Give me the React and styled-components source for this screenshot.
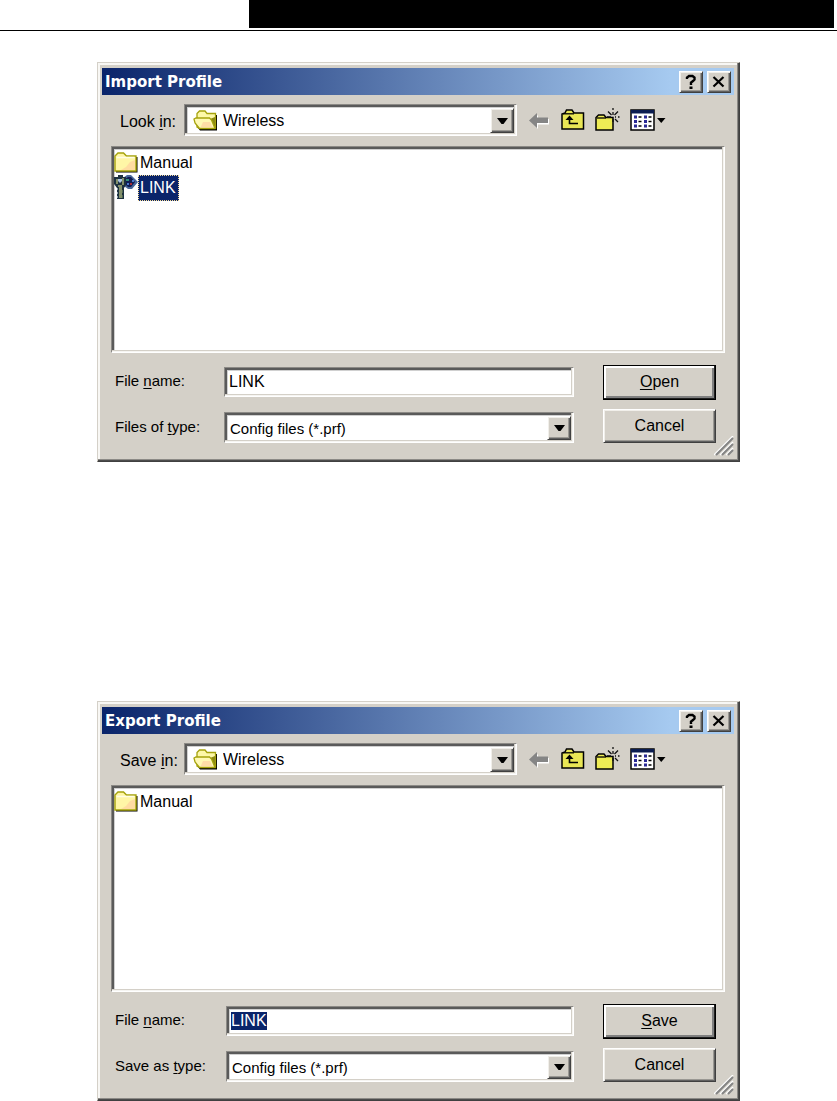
import React, { useEffect, useRef } from 'react';
import styled, { createGlobalStyle, css } from 'styled-components';

const GlobalStyle = createGlobalStyle`
  * {
    box-sizing: border-box;
  }

  body {
    margin: 0;
    background: #ffffff;
    color: #000000;
    font-family: 'Liberation Sans', Arial, sans-serif;
    font-size: 16px;
  }

  u {
    text-underline-offset: 2px;
    text-decoration-thickness: 1px;
  }
`;

const raised = css`
  border: 1px solid;
  border-color: #ffffff #404040 #404040 #ffffff;
  box-shadow: inset 1px 1px 0 #f1efea, inset -1px -1px 0 #606060, inset -2px -2px 0 #9a9893;
`;

const sunken = css`
  border: 1px solid;
  border-color: #8c8a86 #ffffff #ffffff #8c8a86;
  box-shadow: inset -1px -1px 0 #f6f5f2, inset -2px -2px 0 #d4d0c8, inset 2px 2px 0 #5a5a5a,
    inset 3px 3px 0 #d0d0d0;
`;

const PageHeader = styled.header`
  padding: 0 3px 2px 249px;
  border-bottom: 1px solid #000000;
`;

const HeaderBar = styled.div`
  height: 28px;
  background: #000000;
`;

const Page = styled.main`
  display: flex;
  flex-direction: column;
  gap: 239px;
  padding: 31px 97px 0;
`;

const DialogWindow = styled.section`
  position: relative;
  padding: 5px 5px 18px 4px;
  background: #d4d0c8;
  border: 1px solid;
  border-color: #d4d0c8 #404040 #404040 #d4d0c8;
  box-shadow: inset -1px -1px 0 #4c4c4c, inset -2px -2px 0 #8c8a86, inset 2px 2px 0 #f8f7f4;
`;

const TitleBar = styled.div`
  display: flex;
  align-items: center;
  gap: 4px;
  height: 27px;
  padding: 0 3px;
  background: linear-gradient(to right, #0a246a, #a6caf0 90%);
`;

const Title = styled.h2`
  flex: 1;
  margin: 0;
  color: #ffffff;
  font-family: 'DejaVu Sans', Verdana, sans-serif;
  font-size: 15px;
  font-weight: bold;
  line-height: 24px;
`;

const CaptionButton = styled.button`
  ${raised}
  display: flex;
  align-items: center;
  justify-content: center;
  width: 24px;
  height: 22px;
  padding: 0;
  background: #d4d0c8;
`;

const Body = styled.div`
  display: flex;
  flex-direction: column;
  padding: 9px 9px 0;
`;

const LocationRow = styled.div`
  display: flex;
  align-items: center;
  height: 32px;
`;

const LocationLabel = styled.label`
  width: 73px;
  padding: 3px 0 0 9px;
  white-space: nowrap;
`;

const Combo = styled.div`
  ${sunken}
  display: flex;
  flex: 1;
  align-items: center;
  min-width: 0;
  height: ${props => props.$tall ? '32px' : '31px'};
  padding: 3px 2px 2px ${props => props.$tall ? '8px' : '3px'};
  background: #ffffff;
`;

const Select = styled.select`
  flex: 1;
  min-width: 0;
  height: 24px;
  padding: 0 0 0 ${props => props.$indent}px;
  appearance: none;
  background: transparent;
  border: none;
  outline: none;
  color: #000000;
  font: inherit;
  font-size: ${props => props.$size}px;
`;

const DropArrow = styled.span`
  ${raised}
  display: flex;
  align-items: center;
  justify-content: center;
  align-self: stretch;
  width: 24px;
  background: #d4d0c8;
  pointer-events: none;
`;

const Toolbar = styled.div`
  display: flex;
  align-items: center;
  gap: 10px;
  width: 208px;
  padding-left: 12px;
`;

const ToolButton = styled.button`
  display: flex;
  padding: 0;
  background: none;
  border: none;
`;

const FileList = styled.ul`
  ${sunken}
  height: 207px;
  margin: 10px 0 0;
  padding: 3px 2px;
  background: #ffffff;
  list-style: none;
`;

const FileItem = styled.button`
  display: flex;
  align-items: center;
  height: 25px;
  padding: 0;
  background: none;
  border: none;
  color: #000000;
  font: inherit;
`;

const FileName = styled.span`
  padding: 0 2px 0 1px;
  line-height: 24px;
  border: 1px solid transparent;

  ${props => props.$selected && css`
    background: #0a246a;
    border: 1px dotted #f5db95;
    color: #ffffff;
  `}
`;

const Footer = styled.div`
  display: flex;
  justify-content: space-between;
  gap: 29px;
  margin-top: 12px;
  padding-right: 9px;
`;

const Fields = styled.div`
  display: grid;
  flex: 1;
  grid-template-columns: ${props => props.$labelWidth}px 1fr;
  row-gap: 15px;
  align-items: center;
  padding-top: 2px;
`;

const FieldLabel = styled.label`
  padding: 0 0 3px 4px;
  font-size: 15px;
  white-space: nowrap;
`;

const NameInput = styled.input`
  ${sunken}
  width: 100%;
  height: 30px;
  padding: 0 4px;
  background: #ffffff;
  outline: none;
  color: #000000;
  font: inherit;

  &::selection {
    background: #0a246a;
    color: #ffffff;
  }
`;

const Actions = styled.div`
  display: flex;
  flex-direction: column;
  gap: 9px;
`;

const ActionButton = styled.button`
  ${raised}
  width: 113px;
  height: 34px;
  padding: 0 0 1px;
  background: #d4d0c8;
  color: #000000;
  font: inherit;

  ${props => props.$primary && css`
    height: 35px;
    border-color: #000000;
    box-shadow: inset -1px -1px 0 #202020, inset 2px 2px 0 #ffffff, inset -3px -3px 0 #808080;
  `}
`;

const Grip = styled.svg`
  position: absolute;
  right: 5px;
  bottom: 5px;
`;

const HelpIcon = () => (
  <svg width="12" height="16" viewBox="0 0 12 16" fill="none" stroke="#000" aria-hidden="true">
    <path d="M2 5V3.500L4 2h3.500l2 1.500v2L8 7 6 8.500V11" strokeWidth="2.400" />
    <path d="M4.500 12.500h3v2.500h-3z" fill="#000" stroke="none" />
  </svg>
);

const CloseIcon = () => (
  <svg width="14" height="14" viewBox="0 0 14 14" aria-hidden="true">
    <path d="M1.500 2l10 9.500M11.500 2l-10 9.500" stroke="#000" strokeWidth="2.200" />
  </svg>
);

const TriangleIcon = () => (
  <svg width="11" height="6" viewBox="0 0 11 6" aria-hidden="true">
    <path d="M0 0h11L6.500 6h-2z" fill="#000" />
  </svg>
);

const OpenFolderIcon = () => (
  <svg width="25" height="21" viewBox="0 0 25 21" aria-hidden="true">
    <path d="M5 18h17V5h2v15.500H7z" fill="#000" />
    <path d="M4 17V3.500L6.500 1h5.500l2 2.500h8.500V18H6z" fill="#fdf8a8" stroke="#a5a20c" strokeWidth="1.300" />
    <path d="M17 9l5-2v11.500z" fill="#8d8a14" />
    <path d="M1 9l2-1h13.500l2 2 3.500 8.500H6.500L2 13z" fill="#fff9b4" stroke="#a5a20c" strokeWidth="1.300" />
    <path d="M10 12h7l2.500 5.500H7.500z" fill="#ffd6a4" opacity="0.800" />
  </svg>
);

const FolderIcon = () => (
  <svg width="24" height="22" viewBox="0 0 24 22" aria-hidden="true">
    <path d="M2 19h20V5h1.500v15.500H2z" fill="#000" />
    <path d="M1 19V4l3-3h5.500l3 3H22v15z" fill="#fff6a6" stroke="#a5a20c" strokeWidth="1.400" />
    <path d="M2.500 5.500h18" stroke="#fffde4" strokeWidth="1.500" />
    <path d="M21 8v10H7l5-3 4-5z" fill="#ffd2a0" opacity="0.700" />
  </svg>
);

const ProfileIcon = () => (
  <svg width="24" height="25" viewBox="0 0 24 25" aria-hidden="true">
    <path d="M9 3l4-3h4l7 7-6 7h-4l-4-3z" fill="#49689a" />
    <path d="M11 4l3-2h3l4 5-4 5h-3l-3-3z" fill="#101c52" />
    <path d="M12 4h3v2h-3z" fill="#2f8f78" />
    <path d="M16 8h2v2h-2z" fill="#a52936" />
    <path d="M13 8h2v2h-2zM18 5h2v2h-2z" fill="#4a78cc" />
    <path d="M0 2h4V0h5v2h3v8l-2 3v11H3V13L0 9z" fill="#1d3140" />
    <path d="M2 4h2v5H2zM8 3h2v7H8zM4 10h4v2H4zM5 12h3v11H5z" fill="#83906a" />
    <path d="M4 4h4v2l-2 2-2-2z" fill="#a9c3e4" />
    <path d="M8 15h1v3H8zM8 20h1v3H8z" fill="#4d6552" />
    <path d="M3 13h1v2H3zM3 17h1v2H3zM3 21h1v2H3z" fill="#8fa0a8" />
  </svg>
);

const BackIcon = () => (
  <svg width="22" height="20" viewBox="0 0 22 20" aria-hidden="true">
    <path d="M2 11.500L9 5v4h11v5.500H9V19z" fill="#fff" />
    <path d="M0 10.500L8 3v4.500h11v5.500H8v5z" fill="#858585" />
  </svg>
);

const UpFolderIcon = () => (
  <svg width="24" height="22" viewBox="0 0 24 22" aria-hidden="true">
    <path d="M1 20V5l3-1 1.500-3H11l2 3h9.500v16z" fill="#e9e655" stroke="#000" strokeWidth="1.500" />
    <path d="M2 4.800h11" stroke="#000" strokeWidth="1.300" />
    <path d="M8.500 8v6.500H17" fill="none" stroke="#000" strokeWidth="1.600" />
    <path d="M4.500 11h8l-4-4.500z" fill="#000" />
  </svg>
);

const NewFolderIcon = () => (
  <svg width="25" height="24" viewBox="0 0 25 24" aria-hidden="true">
    <path d="M1 22V9.500L3.500 7H9l2 2.500h7V22z" fill="#eeec55" stroke="#000" strokeWidth="1.500" />
    <path d="M2 10h9" stroke="#000" strokeWidth="1.300" />
    <path
      d="M18 0v2M18 4v3M18 11v3M12 9h4M20 9h1M23 9h1.500M13 3.500l3.500 3.500M23 3.500L19.500 7M20 11l3 3"
      fill="none"
      stroke="#111"
      strokeWidth="1.300"
    />
  </svg>
);

const ViewIcon = () => (
  <svg width="36" height="22" viewBox="0 0 36 22" aria-hidden="true">
    <path d="M1 1h23v20H1z" fill="#fff" stroke="#000" strokeWidth="1.500" />
    <path d="M1 1h23v3.500H1z" fill="#0a1c50" />
    <path d="M4 6.500h3v3H4zM4 11h3v3H4zM4 15.500h3v3H4zM14 6.500h3v3h-3zM14 11h3v3h-3zM14 15.500h3v3h-3z" fill="#2a2a96" />
    <path d="M8.500 8h3M8.500 12.500h3M8.500 17h3M18.500 8h3M18.500 12.500h3M18.500 17h3" stroke="#000" strokeWidth="1.400" />
    <path d="M27 9h8.500l-4.250 5z" fill="#000" />
  </svg>
);

const Dialog = ({ id, title, lookLabel, typeLabel, action, files, labelWidth, selectName }) => {
  const nameRef = useRef(null);

  useEffect(() => {
    if (selectName) {
      nameRef.current.focus({ preventScroll: true });
      nameRef.current.select();
    }
  }, [selectName]);

  return (
    <DialogWindow role="dialog" aria-labelledby={`${id}-title`}>
      <TitleBar>
        <Title id={`${id}-title`}>{title}</Title>
        <CaptionButton type="button" aria-label="Help"><HelpIcon /></CaptionButton>
        <CaptionButton type="button" aria-label="Close"><CloseIcon /></CaptionButton>
      </TitleBar>

      <Body>
        <LocationRow>
          <LocationLabel htmlFor={`${id}-folder`}>{lookLabel} <u>i</u>n:</LocationLabel>
          <Combo $tall>
            <OpenFolderIcon />
            <Select id={`${id}-folder`} $indent={5} $size={16}>
              <option>Wireless</option>
            </Select>
            <DropArrow><TriangleIcon /></DropArrow>
          </Combo>
          <Toolbar>
            <ToolButton type="button" aria-label="Back"><BackIcon /></ToolButton>
            <ToolButton type="button" aria-label="Up one level"><UpFolderIcon /></ToolButton>
            <ToolButton type="button" aria-label="New folder"><NewFolderIcon /></ToolButton>
            <ToolButton type="button" aria-label="View"><ViewIcon /></ToolButton>
          </Toolbar>
        </LocationRow>

        <FileList>
          {files.map(file => (
            <li key={file.name}>
              <FileItem type="button">
                {file.folder ? <FolderIcon /> : <ProfileIcon />}
                <FileName $selected={file.selected}>{file.name}</FileName>
              </FileItem>
            </li>
          ))}
        </FileList>

        <Footer>
          <Fields $labelWidth={labelWidth}>
            <FieldLabel htmlFor={`${id}-name`}>File <u>n</u>ame:</FieldLabel>
            <NameInput id={`${id}-name`} ref={nameRef} type="text" defaultValue="LINK" />
            <FieldLabel htmlFor={`${id}-type`}>{typeLabel} <u>t</u>ype:</FieldLabel>
            <Combo>
              <Select id={`${id}-type`} $indent={2} $size={15}>
                <option>Config files (*.prf)</option>
              </Select>
              <DropArrow><TriangleIcon /></DropArrow>
            </Combo>
          </Fields>
          <Actions>
            <ActionButton type="button" $primary><u>{action[0]}</u>{action.slice(1)}</ActionButton>
            <ActionButton type="button">Cancel</ActionButton>
          </Actions>
        </Footer>
      </Body>

      <Grip width="20" height="20" viewBox="0 0 20 20" aria-hidden="true">
        <path d="M0 19L19 0M6 19L19 6M12 19l7-7" stroke="#fff" strokeWidth="1.500" />
        <path d="M2 19L19 2M8 19L19 8M14 19l5-5" stroke="#858585" strokeWidth="2" />
      </Grip>
    </DialogWindow>
  );
};

const importFiles = [
  { name: 'Manual', folder: true },
  { name: 'LINK', selected: true }
];

const exportFiles = [
  { name: 'Manual', folder: true }
];

const App = () => (
  <>
    <GlobalStyle />
    <PageHeader>
      <HeaderBar />
    </PageHeader>
    <Page>
      <Dialog
        id="import"
        title="Import Profile"
        lookLabel="Look"
        typeLabel="Files of"
        action="Open"
        files={importFiles}
        labelWidth={113}
      />
      <Dialog
        id="export"
        title="Export Profile"
        lookLabel="Save"
        typeLabel="Save as"
        action="Save"
        files={exportFiles}
        labelWidth={115}
        selectName
      />
    </Page>
  </>
);

export default App;
